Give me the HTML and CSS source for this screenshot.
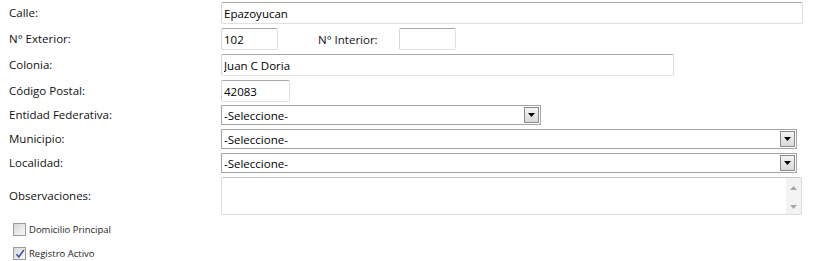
FILE: index.html
```html
<!DOCTYPE html>
<html>
<head>
<meta name="viewport" content="width=device-width, initial-scale=1">
<link rel="stylesheet" href="styles.css">
</head>
<body>

<div class="domicilio">
  <!-- datos del domicilio -->
  <label class="lbl">Calle:</label>
  <div class="field"><input type="text" class="txt w-calle" value="Epazoyucan"></div>

  <label class="lbl">N° Exterior:</label>
  <div class="field">
    <input type="text" class="txt w-num" value="102">
    <label class="lbl-int">N° Interior:</label>
    <input type="text" class="txt w-num" value="">
  </div>

  <label class="lbl">Colonia:</label>
  <div class="field"><input type="text" class="txt w-colonia" value="Juan C Doria"></div>

  <label class="lbl">Código Postal:</label>
  <div class="field"><input type="text" class="txt w-cp" value="42083"></div>

  <label class="lbl sel-row first-sel">Entidad Federativa:</label>
  <div class="field sel-row first-sel">
    <div class="combo w-entidad">
      <select class="cbo"><option>-Seleccione-</option></select>
      <span class="arrow"><svg width="7" height="4" viewBox="0 0 7 4"><path d="M0 0h7L3.5 4z" fill="#000"/></svg></span>
    </div>
  </div>

  <label class="lbl sel-row">Municipio:</label>
  <div class="field sel-row">
    <div class="combo w-mun">
      <select class="cbo"><option>-Seleccione-</option></select>
      <span class="arrow"><svg width="7" height="4" viewBox="0 0 7 4"><path d="M0 0h7L3.5 4z" fill="#000"/></svg></span>
    </div>
  </div>

  <label class="lbl sel-row">Localidad:</label>
  <div class="field sel-row">
    <div class="combo w-mun">
      <select class="cbo"><option>-Seleccione-</option></select>
      <span class="arrow"><svg width="7" height="4" viewBox="0 0 7 4"><path d="M0 0h7L3.5 4z" fill="#000"/></svg></span>
    </div>
  </div>

  <label class="lbl obs-row">Observaciones:</label>
  <div class="field obs-row">
    <div class="memo">
      <textarea class="memo-txt"></textarea>
      <div class="memo-bar">
        <svg width="7" height="4" viewBox="0 0 7 4"><path d="M0 4h7L3.5 0z" fill="#a8a8a8"/></svg>
        <svg width="7" height="4" viewBox="0 0 7 4"><path d="M0 0h7L3.5 4z" fill="#a8a8a8"/></svg>
      </div>
    </div>
  </div>
</div>

<div class="checks">
  <label class="chk"><span class="box"></span>Domicilio Principal</label>
  <label class="chk"><span class="box"><svg width="10" height="10" viewBox="0 0 10 10"><path d="M1.5 5.2l2.3 2.8L8.8 1" fill="none" stroke="#3657a8" stroke-width="1.6"/></svg></span>Registro Activo</label>
</div>

</body>
</html>
```

FILE: styles.css
```css
body {
  margin: 2px 0 0 9px;
  font-family: "Open Sans", "Noto Sans", sans-serif;
  font-size: 11.5px;
  color: #111;
  background: #fff;
}

.domicilio {
  display: grid;
  grid-template-columns: 212px 1fr;
  row-gap: 4px;
  align-items: center;
}

.lbl {
  height: 22px;
  line-height: 22px;
}

.field {
  display: flex;
  align-items: center;
  height: 22px;
}

.txt {
  box-sizing: border-box;
  height: 22px;
  margin: 0;
  padding: 0 2px;
  border: 1px solid #e0e0e0;
  border-top-color: #a9a9a9;
  border-left-color: #d4d4d4;
  border-radius: 2px;
  font-family: inherit;
  font-size: 11.5px;
  color: #000;
  outline: none;
}

.w-calle { width: 582px; }
.w-num { width: 57px; }
.w-colonia { width: 453px; }
.w-cp { width: 69px; }

.lbl-int {
  width: 81px;
  margin-left: 40px;
}

/* combos */
.sel-row {
  height: 20px;
  line-height: 20px;
}

.first-sel {
  margin-top: -1px;
}

.combo {
  position: relative;
  height: 20px;
}

.w-entidad { width: 320px; }
.w-mun { width: 576px; }

.cbo {
  -webkit-appearance: none;
  appearance: none;
  box-sizing: border-box;
  width: 100%;
  height: 20px;
  margin: 0;
  padding: 0 0 0 2px;
  border: 1px solid #a3a3a3;
  border-radius: 0;
  background: #fff;
  font-family: inherit;
  font-size: 11.5px;
  color: #000;
  outline: none;
}

.arrow {
  position: absolute;
  top: 2px;
  right: 2px;
  box-sizing: border-box;
  width: 15px;
  height: 16px;
  border: 1px solid #8a8a8a;
  background: linear-gradient(#f4f4f4, #d9d9d9);
  display: flex;
  align-items: center;
  justify-content: center;
}

/* observaciones */
.obs-row {
  height: 38px;
  line-height: 38px;
}

.memo {
  display: flex;
  box-sizing: border-box;
  width: 581px;
  height: 38px;
  border: 1px solid #dcdcdc;
  border-top-color: #c4c4c4;
  border-radius: 2px;
}

.memo-txt {
  flex: 1;
  border: none;
  resize: none;
  outline: none;
  margin: 0;
  padding: 0;
}

.memo-bar {
  width: 15px;
  background: #f3f3f3;
  display: flex;
  flex-direction: column;
  align-items: center;
  justify-content: space-between;
  padding: 8px 0 5px;
}

/* checkboxes */
.checks {
  display: flex;
  flex-direction: column;
  gap: 10px;
  margin: 7px 0 0 4px;
}

.chk {
  display: flex;
  align-items: flex-end;
  height: 14px;
  font-size: 9.5px;
  color: #1e1e1e;
}

.box {
  box-sizing: border-box;
  width: 13px;
  height: 13px;
  margin-right: 3px;
  border: 1px solid #9b9b9b;
  background: linear-gradient(135deg, #d6d6d6, #fafafa);
  display: flex;
  align-items: center;
  justify-content: center;
}
```
